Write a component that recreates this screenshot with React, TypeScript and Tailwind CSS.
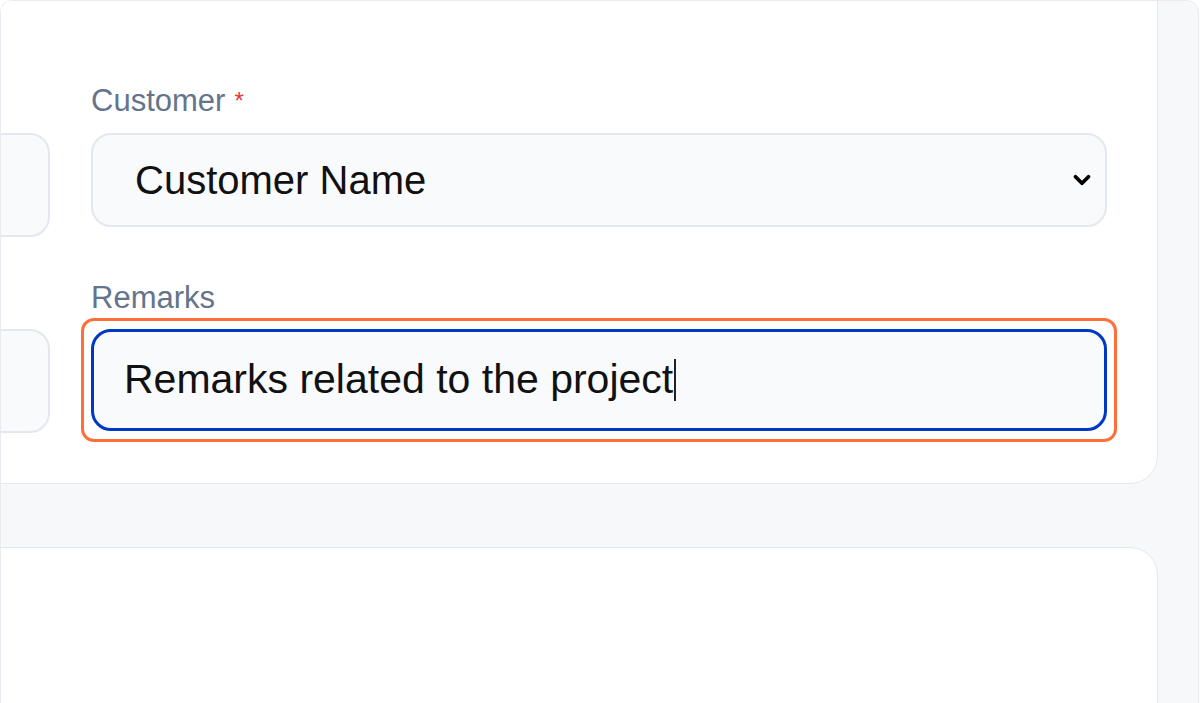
import { ChevronDown } from "lucide-react";

const font = { fontFamily: '"Liberation Sans", Arial, sans-serif' };

function Label({ text, required }: { text: string; required?: boolean }) {
  return (
    <div className="mb-[14px] h-[36px] text-[31px] leading-[36px] text-[#64748b]">
      {text}
      {required && <span className="ml-[9px] align-top text-[24px] text-[#e53935]">*</span>}
    </div>
  );
}

function GhostField() {
  return (
    <div>
      <div className="mb-[14px] h-[36px]" />
      <div className="h-[104px] rounded-[20px] border-2 border-[#e3e8f0] bg-[#f8fafc]" />
    </div>
  );
}

export default function App() {
  return (
    <div className="h-[703px] overflow-hidden bg-white" style={font}>
      <div className="h-[780px] w-[1199px] overflow-hidden rounded-[12px] border border-[#ebeaf2] bg-[#f7f8fa] pr-[40px]">
        {/* Project details card */}
        <div className="ml-[-240px] mt-[-31px] rounded-br-[28px] border border-[#e3e8ef] bg-white px-[50px] pb-[50px] pt-[112px]">
          <div className="grid grid-cols-[1fr_1016px] gap-x-[41px] gap-y-[43px]">
            <GhostField />
            <div>
              <Label text="Customer" required />
              <div className="flex h-[94px] items-center justify-between rounded-[20px] border-2 border-[#e3e8f0] bg-[#f8fafc] pl-[42px] pr-[10px]">
                <span className="text-[40px] text-[#111]">Customer Name</span>
                <ChevronDown size={26} strokeWidth={3.5} className="text-black" />
              </div>
            </div>

            <div>
              <div className="mb-[13px] h-[36px]" />
              <div className="h-[104px] rounded-[20px] border-2 border-[#e3e8f0] bg-[#f8fafc]" />
            </div>
            <div>
              <Label text="Remarks" />
              <div className="relative">
                <div className="mt-[-1px] flex h-[102px] items-center rounded-[20px] border-[3px] border-[#0038c6] bg-[#f8fafc] pl-[30px]">
                  <span className="text-[41px] text-[#111]">Remarks related to the project</span>
                  <span className="ml-[1px] h-[42px] w-[2px] bg-[#222]" />
                </div>
                {/* highlight ring */}
                <div className="pointer-events-none absolute inset-x-[-10px] bottom-[-11px] top-[-11px] rounded-[13px] border-[3px] border-[#ff6f3c]" />
              </div>
            </div>
          </div>
        </div>

        {/* Next card */}
        <div className="ml-[-240px] mt-[63px] h-[300px] rounded-tr-[28px] border border-[#e3e8ef] bg-white" />
      </div>
    </div>
  );
}
